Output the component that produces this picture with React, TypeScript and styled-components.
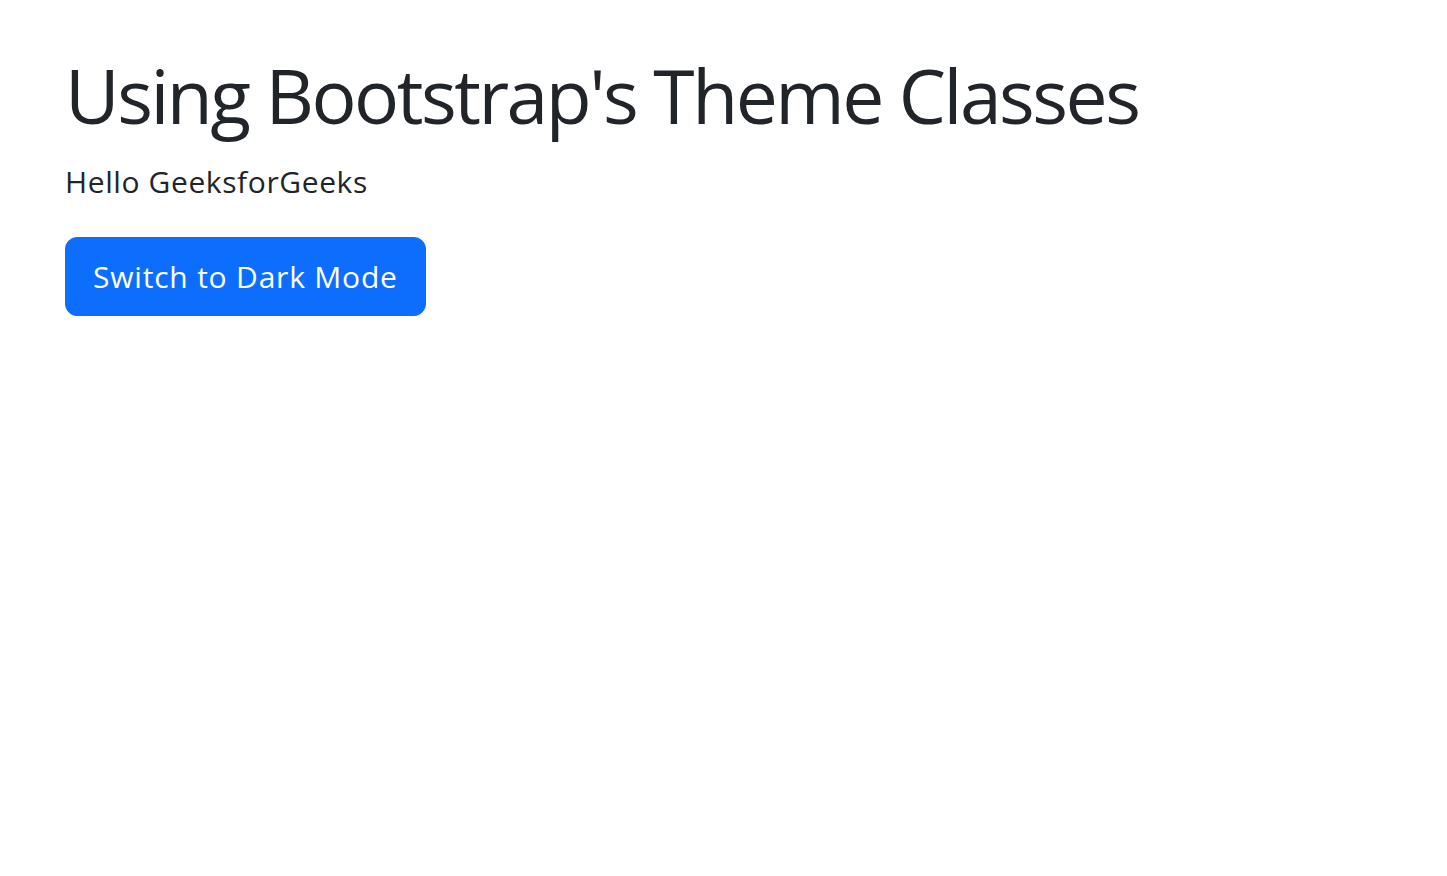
import React from "react";
import styled, { createGlobalStyle } from "styled-components";

const GlobalStyle = createGlobalStyle`
  html, body {
    margin: 0;
    padding: 0;
    background: #ffffff;
  }
  body {
    font-family: "Open Sans", "Noto Sans", "Liberation Sans", sans-serif;
    color: #212529;
  }
`;

const Container = styled.main`
  display: flex;
  flex-direction: column;
  align-items: flex-start;
  padding: 50px 65px 0 65px;
`;

const Title = styled.h1`
  margin: 0 0 19px 0;
  font-size: 75px;
  line-height: 90px;
  font-weight: 400;
  letter-spacing: -2.5px;
  color: #212529;
  white-space: nowrap;
`;

const Text = styled.p`
  margin: 0 0 33px 0;
  font-size: 30px;
  line-height: 45px;
  font-weight: 400;
  letter-spacing: 0.6px;
  color: #212529;
`;

const Button = styled.button`
  font-family: inherit;
  font-size: 30px;
  line-height: 45px;
  font-weight: 400;
  letter-spacing: 0.8px;
  color: #ffffff;
  background: #0d6efd;
  border: 1px solid #0d6efd;
  border-radius: 12px;
  padding: 16px 27px;
  cursor: pointer;
`;

export default function App() {
  return (
    <>
      <GlobalStyle />
      <Container>
        <Title>Using Bootstrap's Theme Classes</Title>
        <Text>Hello GeeksforGeeks</Text>
        <Button type="button">Switch to Dark Mode</Button>
      </Container>
    </>
  );
}
